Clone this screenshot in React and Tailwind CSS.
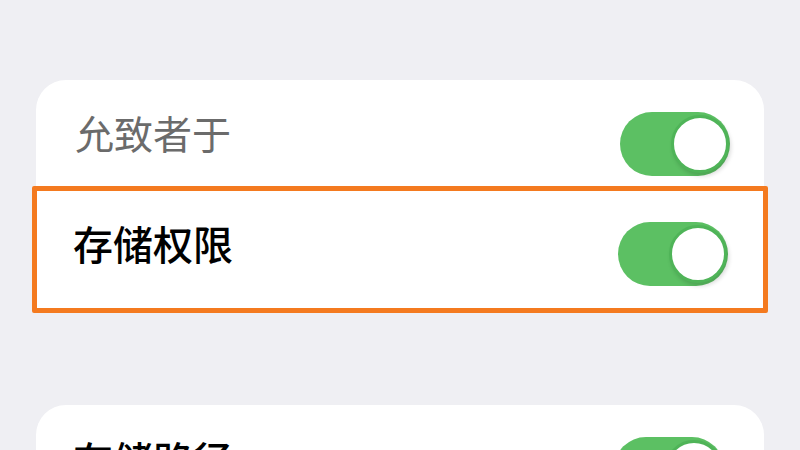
function Toggle() {
  return (
    <div className="relative h-[64px] w-[110px] shrink-0 rounded-full bg-[#5cc063]">
      <div className="absolute right-[1px] top-[3px] h-[58px] w-[58px] rounded-full border-[3px] border-[#4fb458] bg-white shadow-[2px_3px_4px_rgba(0,0,0,0.15)]" />
    </div>
  );
}

export default function App() {
  const font = { fontFamily: '"Noto Sans CJK SC", "Noto Sans", sans-serif' };
  return (
    <div className="h-[450px] w-[800px] overflow-hidden bg-[#efeff3] px-[36px] pt-[80px]" style={font}>
      <div className="rounded-[30px] bg-white">
        <div className="flex h-[106px] items-start justify-between pl-[39px] pr-[34px] pt-[32px]">
          <span className="mt-[1px] text-[39px] leading-none text-[#6b6b6b]">允致者于</span>
          <Toggle />
        </div>
        <div className="-ml-[4px] -mr-[4px] flex h-[127px] items-start justify-between rounded-[2px] border-[5px] border-[#f47a1f] bg-white pl-[36px] pr-[35px] pt-[31px]">
          <span className="mt-[1px] text-[40px] font-medium leading-none text-black">存储权限</span>
          <Toggle />
        </div>
      </div>
      <div className="mt-[92px] rounded-[30px] bg-white">
        <div className="flex h-[106px] items-start justify-between pl-[37px] pr-[40px] pt-[32px]">
          <span className="mt-[2px] text-[40px] font-medium leading-none text-black">存储路径</span>
          <Toggle />
        </div>
      </div>
    </div>
  );
}
